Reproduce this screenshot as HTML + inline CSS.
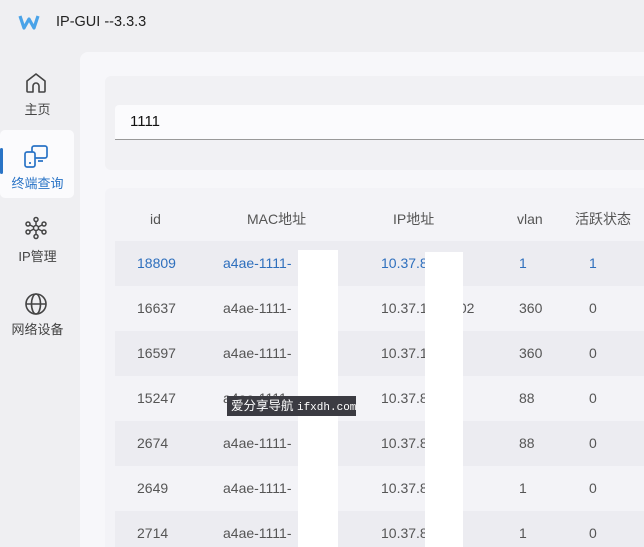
<!DOCTYPE html><html><head><meta charset="utf-8"><style>
html,body{margin:0;width:644px;height:547px;overflow:hidden}
body{background:#efeff2;font-family:"Liberation Sans","Noto Sans CJK SC",sans-serif;position:relative}
.a{position:absolute}
.t{position:absolute;font-size:14px;line-height:18px;color:#555;white-space:nowrap}
.nav{position:absolute;left:0;width:75px;text-align:center;font-size:13px;line-height:18px;color:#444}
.row{position:absolute;left:115px;width:529px;height:45px}
</style></head><body>
<svg class="a" style="left:18px;top:13px" width="22" height="18" viewBox="0 0 22 18"><path d="M2 3 L6 15 L11 6 L16 15 L20 3" fill="none" stroke="#4aa3e8" stroke-width="3.2" stroke-linejoin="round"/></svg>
<div class="t" style="left:56px;top:13px;font-size:14.5px;color:#222">IP-GUI --3.3.3</div>
<div class="a" style="left:80px;top:52px;width:564px;height:495px;background:#f7f7fa;border-top-left-radius:8px"></div>
<div class="a" style="left:105px;top:76px;width:539px;height:94px;background:#f1f1f4;border-radius:6px 0 0 6px"></div>
<div class="a" style="left:115px;top:105px;width:529px;height:34px;background:#fbfbfd;border-bottom:1px solid #999;border-radius:4px 0 0 0"></div>
<div class="t" style="left:130px;top:113px;font-size:15px;color:#111">1111</div>
<div class="a" style="left:105px;top:188px;width:539px;height:359px;background:#f3f3f7;border-radius:6px 0 0 0"></div>
<div class="row" style="top:241px;background:#ececf1"></div>
<div class="row" style="top:331px;background:#ececf1"></div>
<div class="row" style="top:421px;background:#ececf1"></div>
<div class="row" style="top:511px;background:#ececf1"></div>
<div class="t" style="left:150px;top:210px">id</div>
<div class="t" style="left:247px;top:210px">MAC地址</div>
<div class="t" style="left:393px;top:210px">IP地址</div>
<div class="t" style="left:517px;top:210px">vlan</div>
<div class="t" style="left:575px;top:210px">活跃状态</div>
<div class="t" style="left:137px;top:254px;color:#2e6fbd">18809</div><div class="t" style="left:223px;top:254px;color:#2e6fbd">a4ae-1111-</div><div class="t" style="left:381px;top:254px;color:#2e6fbd">10.37.8</div><div class="t" style="left:519px;top:254px;color:#2e6fbd">1</div><div class="t" style="left:589px;top:254px;color:#2e6fbd">1</div>
<div class="t" style="left:137px;top:299px">16637</div><div class="t" style="left:223px;top:299px">a4ae-1111-</div><div class="t" style="left:381px;top:299px">10.37.1&nbsp;&nbsp;&nbsp;&nbsp;&nbsp;&nbsp;&nbsp;&nbsp;02</div><div class="t" style="left:519px;top:299px">360</div><div class="t" style="left:589px;top:299px">0</div>
<div class="t" style="left:137px;top:344px">16597</div><div class="t" style="left:223px;top:344px">a4ae-1111-</div><div class="t" style="left:381px;top:344px">10.37.1</div><div class="t" style="left:519px;top:344px">360</div><div class="t" style="left:589px;top:344px">0</div>
<div class="t" style="left:137px;top:389px">15247</div><div class="t" style="left:223px;top:389px">a4ae-1111-</div><div class="t" style="left:381px;top:389px">10.37.8</div><div class="t" style="left:519px;top:389px">88</div><div class="t" style="left:589px;top:389px">0</div>
<div class="t" style="left:137px;top:434px">2674</div><div class="t" style="left:223px;top:434px">a4ae-1111-</div><div class="t" style="left:381px;top:434px">10.37.8</div><div class="t" style="left:519px;top:434px">88</div><div class="t" style="left:589px;top:434px">0</div>
<div class="t" style="left:137px;top:479px">2649</div><div class="t" style="left:223px;top:479px">a4ae-1111-</div><div class="t" style="left:381px;top:479px">10.37.8</div><div class="t" style="left:519px;top:479px">1</div><div class="t" style="left:589px;top:479px">0</div>
<div class="t" style="left:137px;top:524px">2714</div><div class="t" style="left:223px;top:524px">a4ae-1111-</div><div class="t" style="left:381px;top:524px">10.37.8</div><div class="t" style="left:519px;top:524px">1</div><div class="t" style="left:589px;top:524px">0</div>
<div class="a" style="left:298px;top:250px;width:40px;height:297px;background:#fff"></div>
<div class="a" style="left:425px;top:252px;width:38px;height:295px;background:#fff"></div>
<div class="a" style="left:227px;top:396px;width:129px;height:20px;background:#3b3b42"></div>
<div class="t" style="left:231px;top:397px;font-size:12.5px;color:#fff">爱分享导航 <span style="font-family:'Liberation Mono',monospace;font-size:11px">ifxdh.com</span></div>
<svg class="a" style="left:24px;top:71px" width="24" height="24" viewBox="0 0 24 24" fill="none" stroke="#444" stroke-width="1.6" stroke-linejoin="round"><path d="M3 10 L12 3 L21 10 V20 a1 1 0 0 1-1 1 H15 V15 a3 3 0 0 0-6 0 V21 H4 a1 1 0 0 1-1-1Z"/></svg>
<div class="nav" style="top:101px">主页</div>
<div class="a" style="left:0;top:130px;width:74px;height:68px;background:#fbfbfd;border-radius:5px"></div>
<div class="a" style="left:0;top:148px;width:3px;height:26px;background:#2a74c6;border-radius:2px"></div>
<svg class="a" style="left:23px;top:144px" width="26" height="26" viewBox="0 0 26 26" fill="none" stroke="#2a74c6" stroke-width="1.7"><rect x="9" y="2" width="15" height="12" rx="2"/><rect x="2" y="8" width="10" height="15" rx="2" fill="#fbfbfd"/><path d="M6 19h2M15 17h5"/></svg>
<div class="nav" style="top:175px;color:#2a74c6">终端查询</div>
<svg class="a" style="left:24px;top:216px" width="24" height="24" viewBox="0 0 24 24" fill="none" stroke="#444" stroke-width="1.5"><circle cx="12" cy="12" r="2.5"/><circle cx="12" cy="3.5" r="2"/><circle cx="12" cy="20.5" r="2"/><circle cx="4" cy="8" r="2"/><circle cx="20" cy="8" r="2"/><circle cx="4" cy="16" r="2"/><circle cx="20" cy="16" r="2"/><path d="M12 5.5v4M12 14.5v4M6 9l4 2M18 9l-4 2M6 15l4-2M18 15l-4-2"/></svg>
<div class="nav" style="top:248px">IP管理</div>
<svg class="a" style="left:24px;top:292px" width="24" height="24" viewBox="0 0 24 24" fill="none" stroke="#444" stroke-width="1.6"><circle cx="12" cy="12" r="10"/><ellipse cx="12" cy="12" rx="4.5" ry="10"/><path d="M2 12h20"/></svg>
<div class="nav" style="top:321px">网络设备</div>
</body></html>
